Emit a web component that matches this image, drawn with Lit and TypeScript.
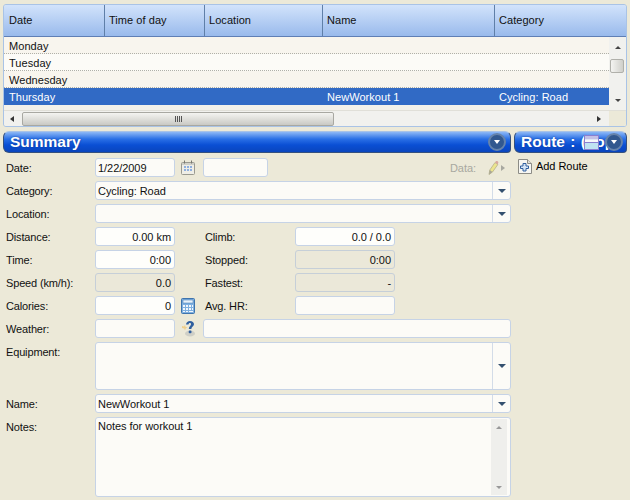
import { LitElement, html, css, svg } from "lit";
import { customElement } from "lit/decorators.js";

const COLUMNS = [
  { title: "Date", width: 101 },
  { title: "Time of day", width: 100 },
  { title: "Location", width: 118 },
  { title: "Name", width: 172 },
  { title: "Category", width: 131 },
];

const ROWS = [
  { cells: ["Monday", "", "", "", ""] },
  { cells: ["Tuesday", "", "", "", ""] },
  { cells: ["Wednesday", "", "", "", ""] },
  { cells: ["Thursday", "", "", "NewWorkout 1", "Cycling: Road"], selected: true },
];

const calendarIcon = svg`<svg width="14" height="15" viewBox="0 0 14 15">
  <rect x="0.5" y="2.5" width="13" height="12" rx="1" fill="#efeee6" stroke="#9a9a90"/>
  <rect x="1" y="3" width="12" height="2" fill="#d0d0c8"/>
  <path d="M3.5 0.5v3M10.5 0.5v3" stroke="#77776f"/>
  <path d="M3 6h2v2H3zM6 6h2v2H6zM9 6h2v2H9zM3 9h2v2H3zM6 9h2v2H6zM9 9h2v2H9z" fill="#8fb0e0"/>
</svg>`;

const calculatorIcon = svg`<svg width="14" height="16" viewBox="0 0 14 16">
  <rect x="0.5" y="0.5" width="13" height="15" rx="1" fill="#7fb0e0" stroke="#3f74ad"/>
  <rect x="2" y="2" width="10" height="3" fill="#e8f2fb" stroke="#3f74ad" stroke-width="0.5"/>
  <path d="M2 7h2v2H2zM5 7h2v2H5zM8 7h2v2H8zM11 7h1v2h-1zM2 10h2v2H2zM5 10h2v2H5zM8 10h2v2H8zM11 10h1v2h-1zM2 13h2v1H2zM5 13h2v1H5zM8 13h4v1H8z" fill="#f2f7fc"/>
</svg>`;

const helpIcon = svg`<svg width="15" height="17" viewBox="0 0 15 17">
  <path d="M1 6l2 0.6L4 5l0.6 2 2 0.6-2 0.8L4 10.5l-0.8-2L1 8z" fill="#f0cf8a"/>
  <ellipse cx="9" cy="13.5" rx="5" ry="3" fill="#cfcfc6"/>
  <path d="M5 4.5C5.2 2.3 7 1 9 1c2.300 0 4 1.300 4 3.300 0 2.200-2.500 2.500-2.700 4.700H7.800C7.800 6.300 10 5.800 10 4.300 10 3.500 9.600 3 8.800 3 8 3 7.600 3.600 7.500 4.500z" fill="#2f5f9e"/>
  <rect x="7.700" y="10.500" width="2.800" height="2.800" rx="1" fill="#2f5f9e"/>
</svg>`;

const pencilIcon = svg`<svg width="16" height="16" viewBox="0 0 16 16">
  <path d="M3 14.500l0.800-4.500L9 2.500l2.800 2L6.500 12z" fill="#ece58e" stroke="#b5b08a" stroke-width="0.800"/>
  <path d="M9 2.500l0.800-1.200c0.500-0.500 1.200-0.500 1.800 0l0.500 0.500c0.400 0.500 0.400 1 0 1.500L11.800 4.500z" fill="#d9a9a0"/>
  <path d="M3 14.500l0.800-4.500 2.700 2z" fill="#a8a698"/>
</svg>`;

const addIcon = svg`<svg width="14" height="15" viewBox="0 0 14 15">
  <path d="M0.500 0.500H9.500L13.500 4.500V14.500H0.500z" fill="#f6f6f2" stroke="#8c8c86"/>
  <path d="M9.500 0.500V4.500H13.500" fill="#e0e0da" stroke="#8c8c86"/>
  <path d="M5 4.500h3v2.500h2.500v2.500H8V12H5V9.500H2.500V7H5z" fill="#d4e4f6" stroke="#2f5f9e"/>
</svg>`;

const windowIcon = svg`<svg class="window-icon" width="15" height="15" viewBox="0 0 15 15">
  <rect x="0.500" y="0.500" width="14" height="14" fill="#dfe6f5" stroke="#8a7fd0"/>
  <rect x="1" y="1" width="13" height="3" fill="#c4c0e6"/>
  <rect x="1" y="5" width="13" height="2" fill="#f8f8fc"/>
  <path d="M0.500 7.500h14" stroke="#8a7fd0"/>
  <rect x="1" y="8" width="13" height="6" fill="#bfe3f2"/>
</svg>`;

const roundButton = html`<span class="round"><span class="round-arrow"></span></span>`;

@customElement("app-root")
export class AppRoot extends LitElement {
  static styles = css`
    :host {
      display: block;
      width: 630px;
      height: 500px;
      overflow: hidden;
      box-sizing: border-box;
      padding: 4px 3px 0;
      background: #ece9d8;
      font-family: "Liberation Sans", Arial, sans-serif;
      font-size: 11px;
      letter-spacing: -0.05px;
      color: #111;
    }

    .list {
      box-sizing: border-box;
      height: 123px;
      border: 1px solid #a9c3e6;
      border-radius: 3px;
      background: #ece9d8;
      display: flex;
      flex-direction: column;
      overflow: hidden;
      letter-spacing: 0.05px;
    }
    .list-head {
      display: flex;
      height: 32px;
      flex: none;
      box-sizing: border-box;
      border-bottom: 1px solid #5f7fb5;
      background: linear-gradient(#d2e3fb, #99baec);
    }
    .list-head div {
      box-sizing: border-box;
      padding-left: 4px;
      line-height: 30px;
      border-right: 1px solid #5f7fa8;
    }
    .list-head div:first-child {
      padding-left: 5px;
    }
    .list-head div:last-child {
      border-right: 0;
    }
    .list-mid {
      display: flex;
      height: 73px;
      flex: none;
    }
    .rows {
      flex: 1;
      background: #f3f1ea;
      overflow: hidden;
    }
    .row {
      display: flex;
      box-sizing: border-box;
      height: 17px;
      line-height: 18px;
      background: #f8f5ee;
      border-bottom: 1px dotted #b0b0a8;
    }
    .row:nth-child(even) {
      background: #fcfbf7;
    }
    .row.selected {
      background: #316ac5;
      color: #fff;
      border-bottom: 0;
    }
    .row span {
      box-sizing: border-box;
      padding-left: 4px;
      flex: none;
    }
    .row span:first-child {
      padding-left: 5px;
    }

    .vbar {
      width: 17px;
      flex: none;
      background: #f1f1ee;
      display: flex;
      flex-direction: column;
      align-items: center;
      justify-content: space-between;
      padding: 9px 0 8px;
      box-sizing: border-box;
      position: relative;
    }
    .vthumb {
      position: absolute;
      left: 1px;
      top: 22px;
      width: 14px;
      height: 14px;
      box-sizing: border-box;
      border: 1px solid #b0b0aa;
      border-radius: 2px;
      background: linear-gradient(90deg, #f4f4f1, #cfcfca);
    }
    .hbar {
      height: 16px;
      flex: none;
      display: flex;
      align-items: center;
      background: #f1f1ee;
      border-top: 1px solid #e0dfd8;
    }
    .hbar-track {
      flex: 1;
      display: flex;
      align-items: center;
      padding-left: 18px;
    }
    .hthumb {
      width: 312px;
      height: 14px;
      box-sizing: border-box;
      border: 1px solid #a8a8a2;
      border-radius: 2px;
      background: linear-gradient(#f4f4f1, #c9c9c4);
      display: flex;
      align-items: center;
      justify-content: center;
      gap: 1px;
    }
    .hthumb i {
      width: 1px;
      height: 6px;
      background: #555;
    }
    .hbar-end {
      width: 17px;
      height: 100%;
      background: #ece9d8;
    }
    .tri-left,
    .tri-right,
    .tri-up,
    .tri-down {
      width: 0;
      height: 0;
      display: block;
      flex: none;
    }
    .tri-left {
      border: 3px solid transparent;
      border-left: 0;
      border-right: 4px solid #333;
    }
    .tri-right {
      border: 3px solid transparent;
      border-right: 0;
      border-left: 4px solid #333;
    }
    .tri-up {
      border: 3px solid transparent;
      border-top: 0;
      border-bottom: 3px solid #444;
    }
    .tri-down {
      border: 3px solid transparent;
      border-bottom: 0;
      border-top: 3px solid #444;
    }

    .main {
      display: flex;
      gap: 3px;
      margin-top: 4px;
    }
    .summary {
      width: 508px;
      flex: none;
    }
    .route {
      width: 113px;
      flex: none;
    }
    .band {
      position: relative;
      box-sizing: border-box;
      height: 22px;
      padding-left: 6px;
      border: 1px solid #34507e;
      border-top-color: #a9c3e6;
      border-radius: 6px 6px 4px 6px;
      background: linear-gradient(#8db8f6 0%, #2a70e6 35%, #0a4fd4 65%, #0a45bd 100%);
      color: #fff;
      font-size: 15.5px;
      font-weight: bold;
      letter-spacing: 0;
      word-spacing: 1px;
      line-height: 20px;
      white-space: nowrap;
      overflow: hidden;
      text-shadow: 0 0 2px #0a3a9a;
    }
    .round {
      position: absolute;
      right: 4px;
      top: 1px;
      width: 18px;
      height: 18px;
      box-sizing: border-box;
      border: 2px solid #6583ab;
      border-radius: 50%;
      background: #31588f;
      display: flex;
      align-items: center;
      justify-content: center;
    }
    .round-arrow {
      width: 0;
      height: 0;
      border: 3px solid transparent;
      border-bottom: 0;
      border-top: 4px solid #fff;
    }
    .window-icon {
      position: absolute;
      left: 69px;
      top: 3px;
    }
    .route .round {
      right: 3px;
    }

    .add-route {
      display: flex;
      align-items: center;
      gap: 4px;
      margin: 5px 0 0 4px;
      height: 16px;
      color: #000;
    }

    .form {
      display: grid;
      grid-template-columns: 89px 80px 28px 92px 100px 116px;
      grid-template-rows: repeat(8, 19px) 48px 19px 80px;
      row-gap: 4px;
      margin-top: 5px;
      padding-left: 3px;
    }
    .label {
      line-height: 20px;
      letter-spacing: -0.15px;
      white-space: nowrap;
    }
    .label.second {
      padding-left: 2px;
    }
    .field {
      box-sizing: border-box;
      padding: 0 2px;
      line-height: 18px;
      border: 1px solid #c6d3e6;
      border-radius: 3px;
      background: #fcfbf7;
      white-space: nowrap;
      display: flex;
      overflow: hidden;
    }
    .field.num {
      justify-content: flex-end;
      padding-right: 3px;
      background: #fefefb;
    }
    .field.off {
      background: #ebe8d9;
      border-color: #c6cfd8;
    }
    .field .value {
      flex: 1;
    }
    .field.num .value {
      text-align: right;
    }
    .wide {
      grid-column: 2 / -1;
    }
    .rest {
      grid-column: 4 / -1;
    }
    .drop {
      width: 18px;
      flex: none;
      margin-right: -2px;
      box-sizing: border-box;
      border-left: 1px solid #d3dce8;
      display: flex;
      align-items: center;
      justify-content: center;
    }
    .drop i {
      width: 0;
      height: 0;
      border: 4px solid transparent;
      border-bottom: 0;
      border-top: 4px solid #34506f;
    }
    .icon {
      display: flex;
      align-items: center;
      padding-left: 6px;
    }
    .date-extra {
      grid-column: 4 / -1;
      display: flex;
      align-items: center;
    }
    .date-extra .field {
      width: 65px;
      height: 19px;
    }
    .data-label {
      margin-left: auto;
      color: #a8a8a0;
    }
    .data-tools {
      display: flex;
      align-items: center;
      margin: 0 6px 0 10px;
      gap: 0;
    }
    .data-tools .tri-right {
      margin-left: -1px;
      border-left-color: #a8a8a0;
    }
    .notes {
      position: relative;
      line-height: 17px;
    }
    .notes-bar {
      position: absolute;
      right: 3px;
      top: 1px;
      bottom: 1px;
      width: 16px;
      box-sizing: border-box;
      padding: 7px 0 6px;
      background: #efefec;
      display: flex;
      flex-direction: column;
      align-items: center;
      justify-content: space-between;
    }
    .notes-bar .tri-up {
      border-bottom-color: #999;
    }
    .notes-bar .tri-down {
      border-top-color: #999;
    }
  `;

  private dropField(value: string) {
    return html`<div class="field wide">
      <span class="value">${value}</span>
      <span class="drop"><i></i></span>
    </div>`;
  }

  private renderList() {
    return html`<div class="list">
      <div class="list-head">
        ${COLUMNS.map((c) => html`<div style="width:${c.width}px">${c.title}</div>`)}
      </div>
      <div class="list-mid">
        <div class="rows">
          ${ROWS.map(
            (r) => html`<div class="row ${r.selected ? "selected" : ""}">
              ${r.cells.map((c, i) => html`<span style="width:${COLUMNS[i].width}px">${c}</span>`)}
            </div>`
          )}
        </div>
        <div class="vbar">
          <span class="tri-up"></span>
          <span class="vthumb"></span>
          <span class="tri-down"></span>
        </div>
      </div>
      <div class="hbar">
        <div class="hbar-track">
          <span class="tri-left" style="margin-left:-12px;margin-right:8px"></span>
          <div class="hthumb"><i></i><i></i><i></i><i></i></div>
          <span class="tri-right" style="margin-left:auto;margin-right:8px"></span>
        </div>
        <div class="hbar-end"></div>
      </div>
    </div>`;
  }

  private renderForm() {
    return html`<div class="form">
      <div class="label">Date:</div>
      <div class="field"><span class="value">1/22/2009</span></div>
      <div class="icon">${calendarIcon}</div>
      <div class="date-extra">
        <div class="field"></div>
        <span class="data-label">Data:</span>
        <span class="data-tools">${pencilIcon}<span class="tri-right"></span></span>
      </div>

      <div class="label">Category:</div>
      ${this.dropField("Cycling: Road")}

      <div class="label">Location:</div>
      ${this.dropField("")}

      <div class="label">Distance:</div>
      <div class="field num"><span class="value">0.00 km</span></div>
      <div></div>
      <div class="label second">Climb:</div>
      <div class="field num"><span class="value">0.0 / 0.0</span></div>
      <div></div>

      <div class="label">Time:</div>
      <div class="field num"><span class="value">0:00</span></div>
      <div></div>
      <div class="label second">Stopped:</div>
      <div class="field num off"><span class="value">0:00</span></div>
      <div></div>

      <div class="label">Speed (km/h):</div>
      <div class="field num off"><span class="value">0.0</span></div>
      <div></div>
      <div class="label second">Fastest:</div>
      <div class="field num off"><span class="value">-</span></div>
      <div></div>

      <div class="label">Calories:</div>
      <div class="field num"><span class="value">0</span></div>
      <div class="icon">${calculatorIcon}</div>
      <div class="label second">Avg. HR:</div>
      <div class="field"></div>
      <div></div>

      <div class="label">Weather:</div>
      <div class="field"></div>
      <div class="icon">${helpIcon}</div>
      <div class="field rest"></div>

      <div class="label">Equipment:</div>
      ${this.dropField("")}

      <div class="label">Name:</div>
      ${this.dropField("NewWorkout 1")}

      <div class="label">Notes:</div>
      <div class="field wide notes">
        <span class="value">Notes for workout 1</span>
        <div class="notes-bar">
          <span class="tri-up"></span>
          <span class="tri-down"></span>
        </div>
      </div>
    </div>`;
  }

  render() {
    return html`
      ${this.renderList()}
      <div class="main">
        <div class="summary">
          <div class="band">Summary${roundButton}</div>
          ${this.renderForm()}
        </div>
        <div class="route">
          <div class="band">Route : (pop${windowIcon}${roundButton}</div>
          <div class="add-route">${addIcon}<span>Add Route</span></div>
        </div>
      </div>
    `;
  }
}
